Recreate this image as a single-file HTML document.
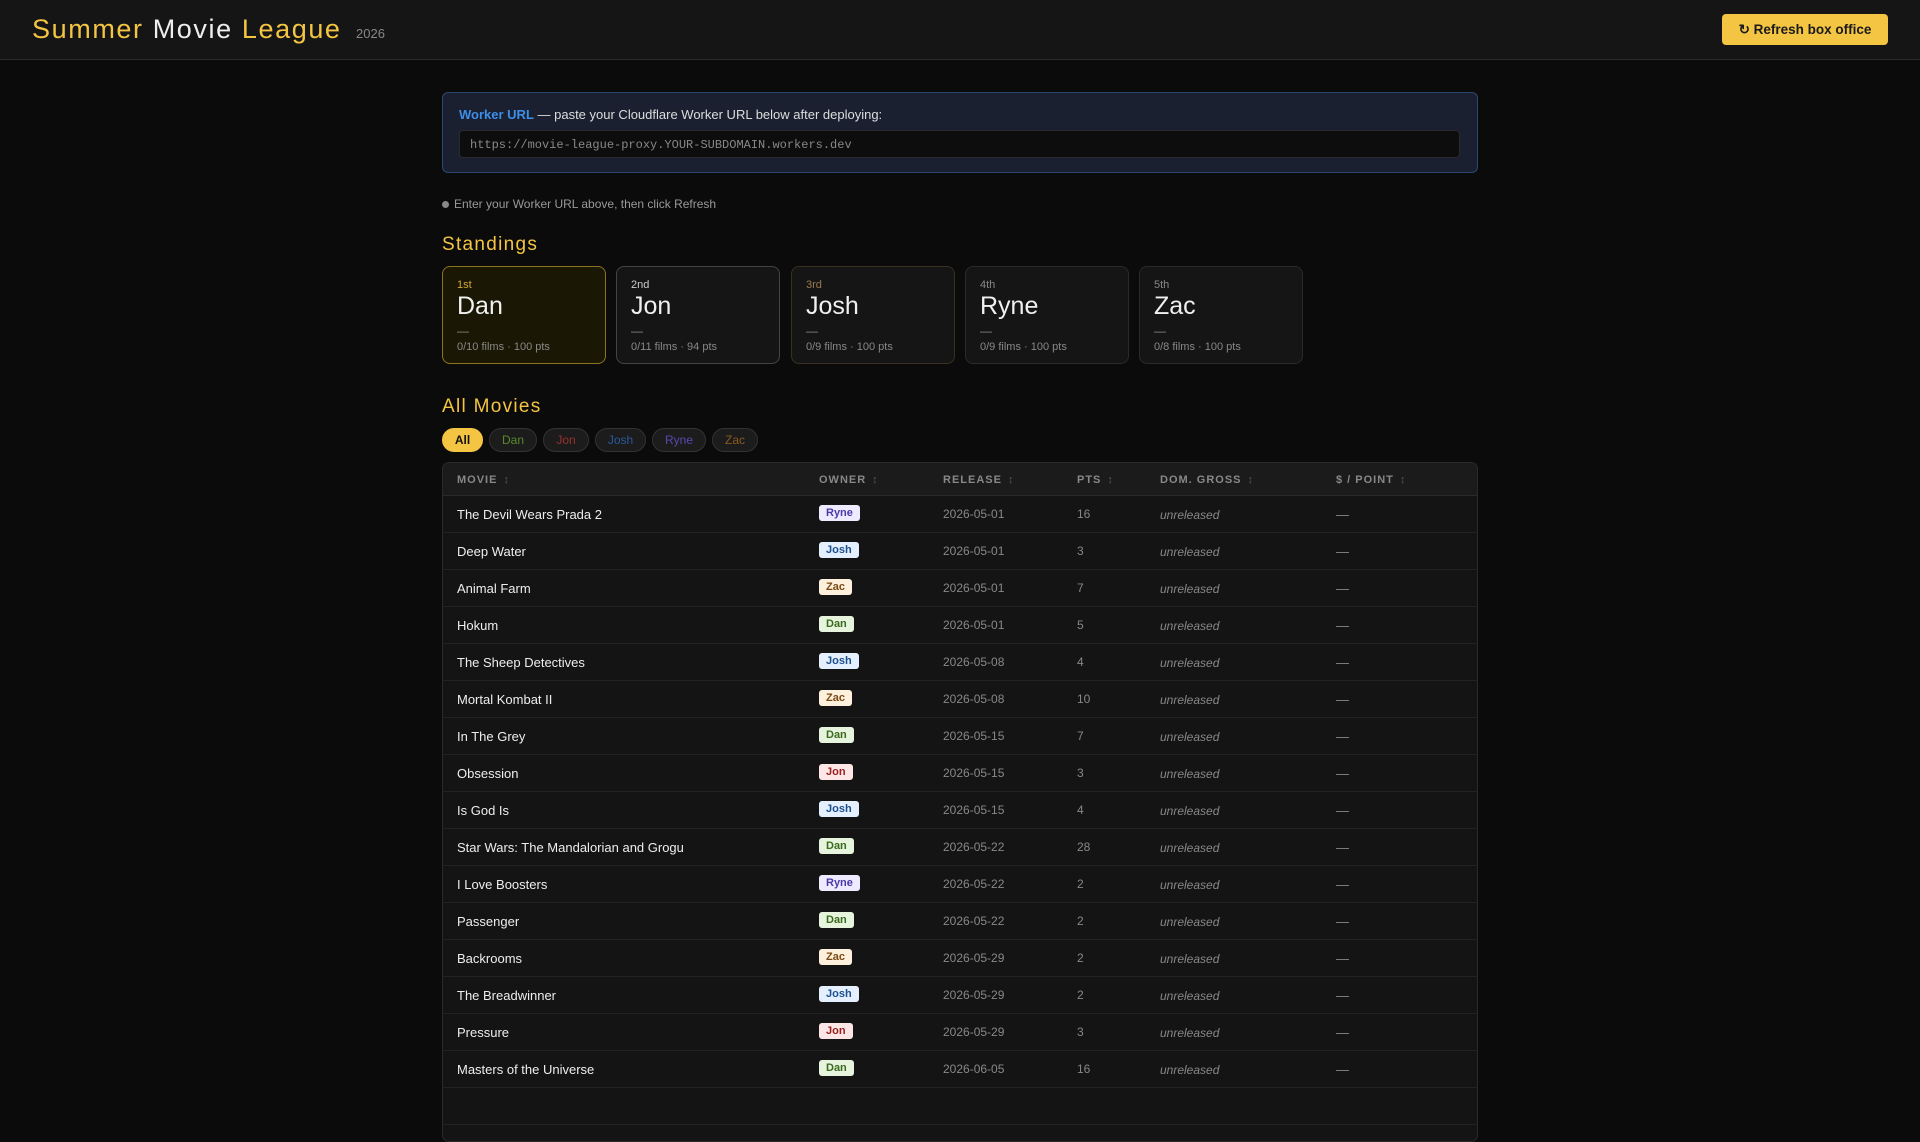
<!DOCTYPE html>
<html><head><meta charset="utf-8"><style>
*{box-sizing:border-box;margin:0;padding:0}
body{width:1920px;height:1080px;overflow:hidden;background:#0b0b0b;font-family:"Liberation Sans",sans-serif;color:#e8e8e8;position:relative}
.hdr{position:absolute;left:0;top:0;width:1920px;height:60px;background:#151515;border-bottom:1px solid #2a2a2a}
.title{position:absolute;left:32px;top:14px;font-size:27px;letter-spacing:1.6px;color:#f4c542;white-space:nowrap}
.title .w{color:#eee}
.yr{position:absolute;left:356px;top:26px;font-size:13px;color:#888}
.btn{position:absolute;left:1722px;top:14px;width:166px;height:31px;background:#f4c542;border-radius:4px;color:#1a1a1a;font-weight:bold;font-size:13.5px;text-align:center;line-height:31px}
.wk{position:absolute;left:442px;top:92px;width:1036px;height:81px;background:#1a2030;border:1px solid #2b4770;border-radius:6px}
.wk p{position:absolute;left:16px;top:14px;font-size:13px;color:#ddd}
.wk b{color:#3d8ee8}
.inp{position:absolute;left:16px;top:37px;width:1001px;height:28px;background:#0d0d0d;border:1px solid #2a2a2a;border-radius:4px;font-family:"Liberation Mono",monospace;font-size:12px;color:#888;padding:7px 10px}
.st{position:absolute;left:442px;top:197px;font-size:12px;color:#999}
.st i{display:inline-block;width:7px;height:7px;border-radius:50%;background:#888;margin-right:5px}
h2{position:absolute;left:442px;font-weight:normal;font-size:19px;letter-spacing:1.3px;color:#f4c542}
.card{position:absolute;top:266px;width:164px;height:98px;background:#151515;border:1px solid #333;border-radius:8px;padding:0 14px}
.card .r{position:absolute;left:14px;top:12px;font-size:11px;color:#bbb}
.card .n{position:absolute;left:14px;top:25px;font-size:25px;color:#f0f0f0}
.card .d{position:absolute;left:14px;top:57px;font-size:12px;color:#888}
.card .f{position:absolute;left:14px;top:74px;font-size:11px;color:#888}
.fl{position:absolute;top:428px;height:24px;border-radius:12px;background:#1c1c1c;border:1px solid #333;font-size:12px;line-height:22px;text-align:center}
.tb{position:absolute;left:442px;top:462px;width:1036px;height:680px;background:#141414;border:1px solid #2a2a2a;border-radius:7px;overflow:hidden}
.th{height:33px;background:#1b1b1b;border-bottom:1px solid #2a2a2a;position:relative;font-size:11px;font-weight:bold;letter-spacing:1px;color:#888}
.th span,.row span{position:absolute}
.th span{top:11px}
.th em{font-style:normal;color:#555;margin-left:6px;font-weight:normal}
.row{height:37px;border-bottom:1px solid #222;position:relative;font-size:13px}
.row span{top:11px}
.c1{left:14px;color:#eee}.c3{left:500px;color:#888;font-size:12px}.c4{left:634px;color:#888;font-size:12px}.c5{left:717px;color:#888;font-style:italic;font-size:12px;top:12px!important}.c6{left:893px;color:#888}
.tag{left:376px;top:9px!important;height:16px;padding:0 7px;border-radius:3px;font-size:11px;font-weight:bold;line-height:16px}
.Ryne{background:#eeeaff;color:#4a3aa8}.Josh{background:#e4f0fd;color:#1d4f8f}.Zac{background:#fdf0dd;color:#7a4a12}.Dan{background:#e6f4dd;color:#3a6a1d}.Jon{background:#fde6e6;color:#9a2020}
</style></head><body>
<div class="hdr"><div class="title">Summer <span class="w">Movie</span> League</div><div class="yr">2026</div>
<div class="btn">↻ Refresh box office</div></div>
<div class="wk"><p><b>Worker URL</b> — paste your Cloudflare Worker URL below after deploying:</p><div class="inp">https://movie-league-proxy.YOUR-SUBDOMAIN.workers.dev</div></div>
<div class="st"><i></i>Enter your Worker URL above, then click Refresh</div>
<h2 style="top:234px">Standings</h2>
<div class="card" style="left:442px;background:#1a1804;border-color:#8a7420"><div class="r" style="color:#d4aa30">1st</div><div class="n">Dan</div><div class="d">—</div><div class="f">0/10 films · 100 pts</div></div>
<div class="card" style="left:616px;border-color:#444"><div class="r" style="color:#ccc">2nd</div><div class="n">Jon</div><div class="d">—</div><div class="f">0/11 films · 94 pts</div></div>
<div class="card" style="left:791px;border-color:#3a3020"><div class="r" style="color:#9a7a50">3rd</div><div class="n">Josh</div><div class="d">—</div><div class="f">0/9 films · 100 pts</div></div>
<div class="card" style="left:965px;border-color:#2a2a2a"><div class="r" style="color:#888">4th</div><div class="n">Ryne</div><div class="d">—</div><div class="f">0/9 films · 100 pts</div></div>
<div class="card" style="left:1139px;border-color:#2a2a2a"><div class="r" style="color:#888">5th</div><div class="n">Zac</div><div class="d">—</div><div class="f">0/8 films · 100 pts</div></div>
<h2 style="top:396px">All Movies</h2>
<div class="fl" style="left:442px;width:41px;background:#f4c542;border-color:#f4c542;color:#111;font-weight:bold">All</div>
<div class="fl" style="left:489px;width:48px;color:#5a8a2a">Dan</div>
<div class="fl" style="left:543px;width:46px;color:#9a3030">Jon</div>
<div class="fl" style="left:595px;width:51px;color:#2a5a9a">Josh</div>
<div class="fl" style="left:652px;width:54px;color:#5a48b0">Ryne</div>
<div class="fl" style="left:712px;width:46px;color:#8a5a20">Zac</div>
<div class="tb">
<div class="th"><span style="left:14px">MOVIE<em>↕</em></span><span style="left:376px">OWNER<em>↕</em></span><span style="left:500px">RELEASE<em>↕</em></span><span style="left:634px">PTS<em>↕</em></span><span style="left:717px">DOM. GROSS<em>↕</em></span><span style="left:893px">$ / POINT<em>↕</em></span></div>
<div class="row"><span class="c1">The Devil Wears Prada 2</span><span class="tag Ryne">Ryne</span><span class="c3">2026-05-01</span><span class="c4">16</span><span class="c5">unreleased</span><span class="c6">—</span></div>
<div class="row"><span class="c1">Deep Water</span><span class="tag Josh">Josh</span><span class="c3">2026-05-01</span><span class="c4">3</span><span class="c5">unreleased</span><span class="c6">—</span></div>
<div class="row"><span class="c1">Animal Farm</span><span class="tag Zac">Zac</span><span class="c3">2026-05-01</span><span class="c4">7</span><span class="c5">unreleased</span><span class="c6">—</span></div>
<div class="row"><span class="c1">Hokum</span><span class="tag Dan">Dan</span><span class="c3">2026-05-01</span><span class="c4">5</span><span class="c5">unreleased</span><span class="c6">—</span></div>
<div class="row"><span class="c1">The Sheep Detectives</span><span class="tag Josh">Josh</span><span class="c3">2026-05-08</span><span class="c4">4</span><span class="c5">unreleased</span><span class="c6">—</span></div>
<div class="row"><span class="c1">Mortal Kombat II</span><span class="tag Zac">Zac</span><span class="c3">2026-05-08</span><span class="c4">10</span><span class="c5">unreleased</span><span class="c6">—</span></div>
<div class="row"><span class="c1">In The Grey</span><span class="tag Dan">Dan</span><span class="c3">2026-05-15</span><span class="c4">7</span><span class="c5">unreleased</span><span class="c6">—</span></div>
<div class="row"><span class="c1">Obsession</span><span class="tag Jon">Jon</span><span class="c3">2026-05-15</span><span class="c4">3</span><span class="c5">unreleased</span><span class="c6">—</span></div>
<div class="row"><span class="c1">Is God Is</span><span class="tag Josh">Josh</span><span class="c3">2026-05-15</span><span class="c4">4</span><span class="c5">unreleased</span><span class="c6">—</span></div>
<div class="row"><span class="c1">Star Wars: The Mandalorian and Grogu</span><span class="tag Dan">Dan</span><span class="c3">2026-05-22</span><span class="c4">28</span><span class="c5">unreleased</span><span class="c6">—</span></div>
<div class="row"><span class="c1">I Love Boosters</span><span class="tag Ryne">Ryne</span><span class="c3">2026-05-22</span><span class="c4">2</span><span class="c5">unreleased</span><span class="c6">—</span></div>
<div class="row"><span class="c1">Passenger</span><span class="tag Dan">Dan</span><span class="c3">2026-05-22</span><span class="c4">2</span><span class="c5">unreleased</span><span class="c6">—</span></div>
<div class="row"><span class="c1">Backrooms</span><span class="tag Zac">Zac</span><span class="c3">2026-05-29</span><span class="c4">2</span><span class="c5">unreleased</span><span class="c6">—</span></div>
<div class="row"><span class="c1">The Breadwinner</span><span class="tag Josh">Josh</span><span class="c3">2026-05-29</span><span class="c4">2</span><span class="c5">unreleased</span><span class="c6">—</span></div>
<div class="row"><span class="c1">Pressure</span><span class="tag Jon">Jon</span><span class="c3">2026-05-29</span><span class="c4">3</span><span class="c5">unreleased</span><span class="c6">—</span></div>
<div class="row"><span class="c1">Masters of the Universe</span><span class="tag Dan">Dan</span><span class="c3">2026-06-05</span><span class="c4">16</span><span class="c5">unreleased</span><span class="c6">—</span></div>
<div class="row"></div>
</div>
</body></html>
